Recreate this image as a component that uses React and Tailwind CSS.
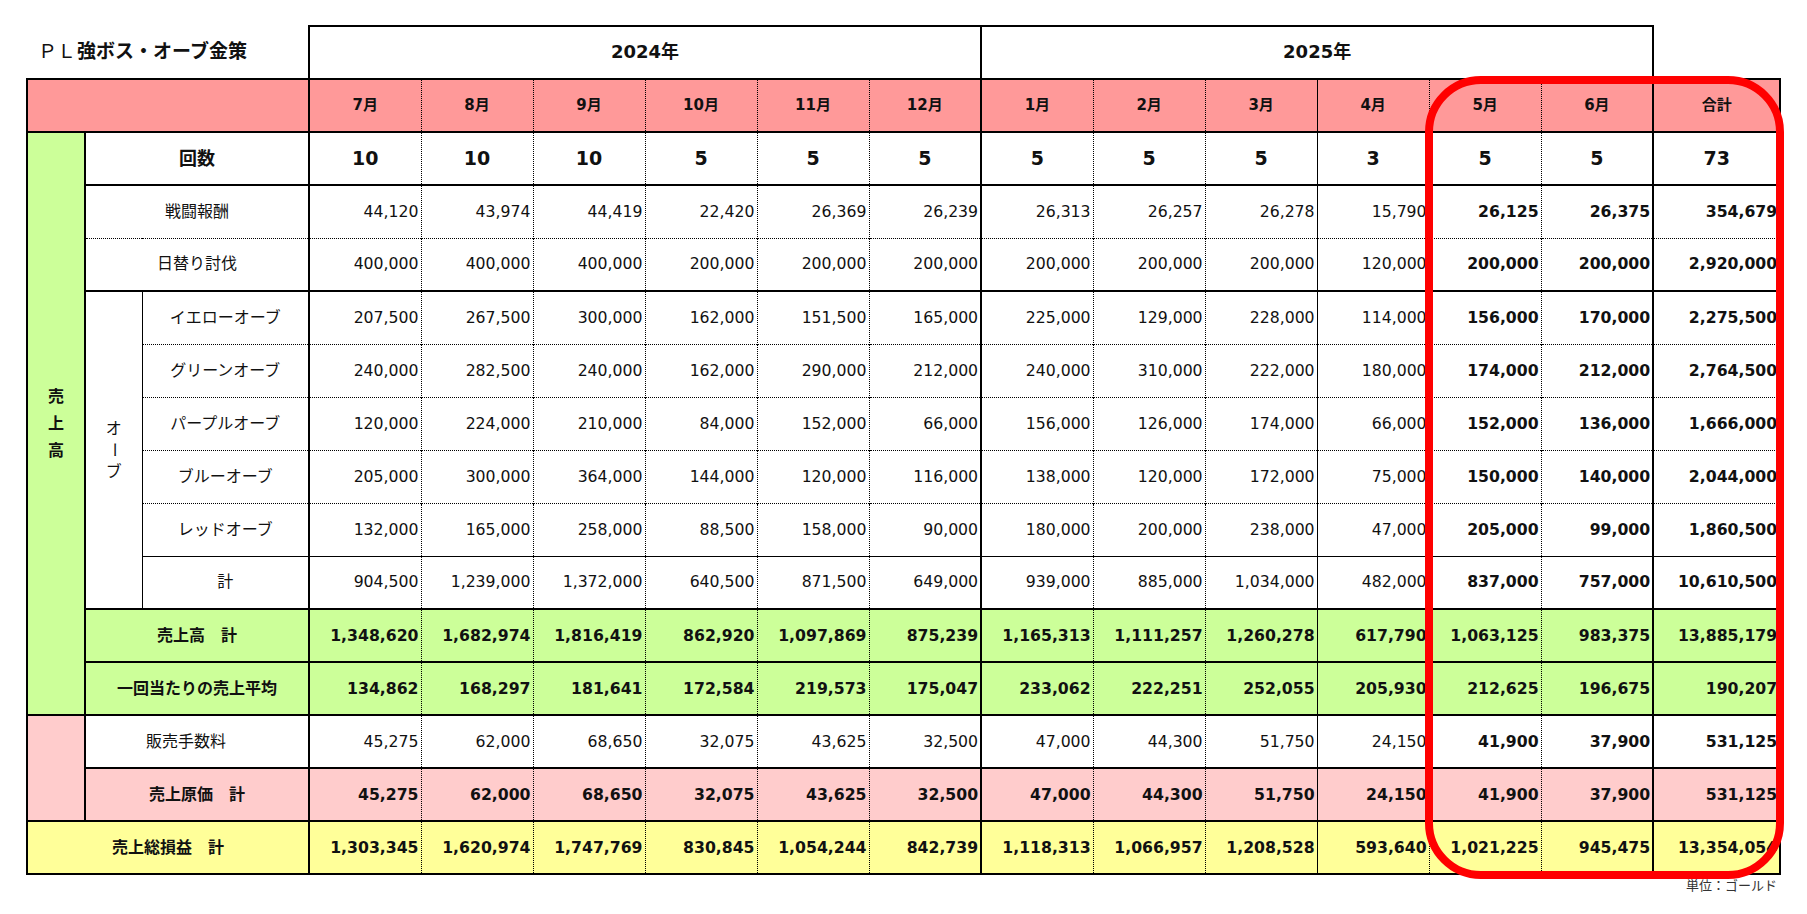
import React from "react";

const THICK_T = "[border-top:2px_solid_#000]";
const DOT_T = "[border-top:1px_dotted_#000]";
const THIN_T = "[border-top:1px_solid_#000]";

const months = ["7月", "8月", "9月", "10月", "11月", "12月", "1月", "2月", "3月", "4月", "5月", "6月", "合計"];

// left border of each data column
const colLeft = [
  "[border-left:2px_solid_#000]",
  "[border-left:1px_dotted_#000]",
  "[border-left:1px_dotted_#000]",
  "[border-left:1px_dotted_#000]",
  "[border-left:1px_dotted_#000]",
  "[border-left:1px_dotted_#000]",
  "[border-left:2px_solid_#000]",
  "[border-left:1px_dotted_#000]",
  "[border-left:1px_dotted_#000]",
  "[border-left:1px_solid_#000]",
  "[border-left:1px_dotted_#000]",
  "[border-left:1px_dotted_#000]",
  "[border-left:2px_solid_#000] [border-right:2px_solid_#000]",
];

const rows = [
  { key: "count", label: "回数", top: THICK_T, values: ["10", "10", "10", "5", "5", "5", "5", "5", "5", "3", "5", "5", "73"] },
  { key: "battle", label: "戦闘報酬", top: THICK_T, values: ["44,120", "43,974", "44,419", "22,420", "26,369", "26,239", "26,313", "26,257", "26,278", "15,790", "26,125", "26,375", "354,679"] },
  { key: "daily", label: "日替り討伐", top: DOT_T, values: ["400,000", "400,000", "400,000", "200,000", "200,000", "200,000", "200,000", "200,000", "200,000", "120,000", "200,000", "200,000", "2,920,000"] },
  { key: "yellow", orb: "イエローオーブ", top: THICK_T, values: ["207,500", "267,500", "300,000", "162,000", "151,500", "165,000", "225,000", "129,000", "228,000", "114,000", "156,000", "170,000", "2,275,500"] },
  { key: "green", orb: "グリーンオーブ", top: DOT_T, values: ["240,000", "282,500", "240,000", "162,000", "290,000", "212,000", "240,000", "310,000", "222,000", "180,000", "174,000", "212,000", "2,764,500"] },
  { key: "purple", orb: "パープルオーブ", top: DOT_T, values: ["120,000", "224,000", "210,000", "84,000", "152,000", "66,000", "156,000", "126,000", "174,000", "66,000", "152,000", "136,000", "1,666,000"] },
  { key: "blue", orb: "ブルーオーブ", top: DOT_T, values: ["205,000", "300,000", "364,000", "144,000", "120,000", "116,000", "138,000", "120,000", "172,000", "75,000", "150,000", "140,000", "2,044,000"] },
  { key: "red", orb: "レッドオーブ", top: DOT_T, values: ["132,000", "165,000", "258,000", "88,500", "158,000", "90,000", "180,000", "200,000", "238,000", "47,000", "205,000", "99,000", "1,860,500"] },
  { key: "orbsum", orb: "計", top: THIN_T, values: ["904,500", "1,239,000", "1,372,000", "640,500", "871,500", "649,000", "939,000", "885,000", "1,034,000", "482,000", "837,000", "757,000", "10,610,500"] },
  { key: "sales", label: "売上高　計", top: THICK_T, bold: true, bg: "bg-[#ccff99]", values: ["1,348,620", "1,682,974", "1,816,419", "862,920", "1,097,869", "875,239", "1,165,313", "1,111,257", "1,260,278", "617,790", "1,063,125", "983,375", "13,885,179"] },
  { key: "avg", label: "一回当たりの売上平均", top: THICK_T, bold: true, bg: "bg-[#ccff99]", values: ["134,862", "168,297", "181,641", "172,584", "219,573", "175,047", "233,062", "222,251", "252,055", "205,930", "212,625", "196,675", "190,207"] },
  { key: "fee", label: "販売手数料", top: THICK_T, shift: true, values: ["45,275", "62,000", "68,650", "32,075", "43,625", "32,500", "47,000", "44,300", "51,750", "24,150", "41,900", "37,900", "531,125"] },
  { key: "cost", label: "売上原価　計", top: THICK_T, bold: true, bg: "bg-[#ffcccc]", values: ["45,275", "62,000", "68,650", "32,075", "43,625", "32,500", "47,000", "44,300", "51,750", "24,150", "41,900", "37,900", "531,125"] },
  { key: "gross", label: "売上総損益　計", top: THICK_T, bold: true, bg: "bg-[#ffff99]", wide: true, values: ["1,303,345", "1,620,974", "1,747,769", "830,845", "1,054,244", "842,739", "1,118,313", "1,066,957", "1,208,528", "593,640", "1,021,225", "945,475", "13,354,054"] },
];

const DataCell = ({ row, value, i, last }) => {
  const heavy = row.bold || i >= 10;
  if (row.key === "count") {
    return (
      <td className={`${row.top} ${colLeft[i]} text-center text-[19px] font-bold`}>{value}</td>
    );
  }
  return (
    <td
      className={`${row.top} ${colLeft[i]} ${last ? "[border-bottom:2px_solid_#000]" : ""} ${row.bg || ""} pr-[2px] text-right text-[15.7px] ${heavy ? "font-bold" : "font-normal"}`}
    >
      {value}
    </td>
  );
};

const Vertical = ({ chars, bold }) => (
  <div className={`flex flex-col items-center ${bold ? "font-bold leading-[27px]" : "font-normal leading-[27px]"} text-[16px]`}>
    {chars.map((c, i) => (
      <span key={i} className={c === "ー" ? "[writing-mode:vertical-rl]" : ""}>
        {c}
      </span>
    ))}
  </div>
);

export default function App() {
  return (
    <div className="relative w-[1807px] h-[914px] bg-white text-[#111] font-['DejaVu_Sans','Noto_Sans_CJK_JP',sans-serif]">
      <div className="pt-[25px] pl-[26px]">
        <table className="table-fixed border-collapse w-[1753px]">
          <colgroup>
            <col className="w-[58px]" />
            <col className="w-[57px]" />
            <col className="w-[167px]" />
            {months.slice(0, 12).map((m) => (
              <col key={m} className="w-[112px]" />
            ))}
            <col className="w-[127px]" />
          </colgroup>
          <tbody>
            {/* year row */}
            <tr className="h-[53px]">
              <td colSpan={3} className="pl-[11px] pb-[2px] text-left text-[19px] whitespace-nowrap">
                <span className="font-normal">ＰＬ</span>
                <span className="ml-[1px] font-bold">強ボス・オーブ金策</span>
              </td>
              <td colSpan={6} className="[border-top:2px_solid_#000] [border-left:2px_solid_#000] pb-[2px] text-center text-[18px] font-bold">
                2024年
              </td>
              <td colSpan={6} className="[border-top:2px_solid_#000] [border-left:2px_solid_#000] [border-right:2px_solid_#000] pb-[2px] text-center text-[18px] font-bold">
                2025年
              </td>
              <td></td>
            </tr>

            {/* month header */}
            <tr className="h-[53px] bg-[#ff9999]">
              <td colSpan={3} className="[border-top:2px_solid_#000] [border-left:2px_solid_#000]"></td>
              {months.map((m, i) => (
                <td key={m} className={`${THICK_T} ${colLeft[i]} text-center text-[15px] font-bold`}>
                  {m}
                </td>
              ))}
            </tr>

            {rows.map((row, r) => {
              const last = r === rows.length - 1;
              return (
                <tr key={row.key} className="h-[53px]">
                  {r === 0 && (
                    <td rowSpan={11} className={`${THICK_T} [border-left:2px_solid_#000] bg-[#ccff99]`}>
                      <Vertical chars={["売", "上", "高"]} bold />
                    </td>
                  )}
                  {row.key === "fee" && (
                    <td rowSpan={2} className={`${THICK_T} [border-left:2px_solid_#000] bg-[#ffcccc]`}></td>
                  )}
                  {row.key === "yellow" && (
                    <td rowSpan={6} className={`${THICK_T} [border-left:2px_solid_#000]`}>
                      <Vertical chars={["オ", "ー", "ブ"]} />
                    </td>
                  )}
                  {row.orb ? (
                    <td className={`${row.top} [border-left:1px_solid_#000] text-center text-[16px]`}>{row.orb}</td>
                  ) : row.wide ? (
                    <td
                      colSpan={3}
                      className={`${row.top} [border-left:2px_solid_#000] [border-bottom:2px_solid_#000] ${row.bg} text-center text-[16px] font-bold`}
                    >
                      {row.label}
                    </td>
                  ) : (
                    <td
                      colSpan={2}
                      className={`${row.top} [border-left:2px_solid_#000] ${row.bg || ""} text-center ${
                        row.key === "count" ? "text-[18px] font-bold" : "text-[16px]"
                      } ${row.bold ? "font-bold" : ""} ${row.shift ? "pr-[22px]" : ""}`}
                    >
                      {row.label}
                    </td>
                  )}
                  {row.values.map((v, i) => (
                    <DataCell key={i} row={row} value={v} i={i} last={last} />
                  ))}
                </tr>
              );
            })}
          </tbody>
        </table>
        <div className="w-[1751px] pt-[3px] text-right text-[13px] text-[#333] leading-[16px]">単位：ゴールド</div>
      </div>

      {/* highlight frame */}
      <div className="pointer-events-none absolute left-[1425px] top-[76px] w-[359px] h-[803px] rounded-[56px] border-[8px] border-[#ff0000]"></div>
    </div>
  );
}
